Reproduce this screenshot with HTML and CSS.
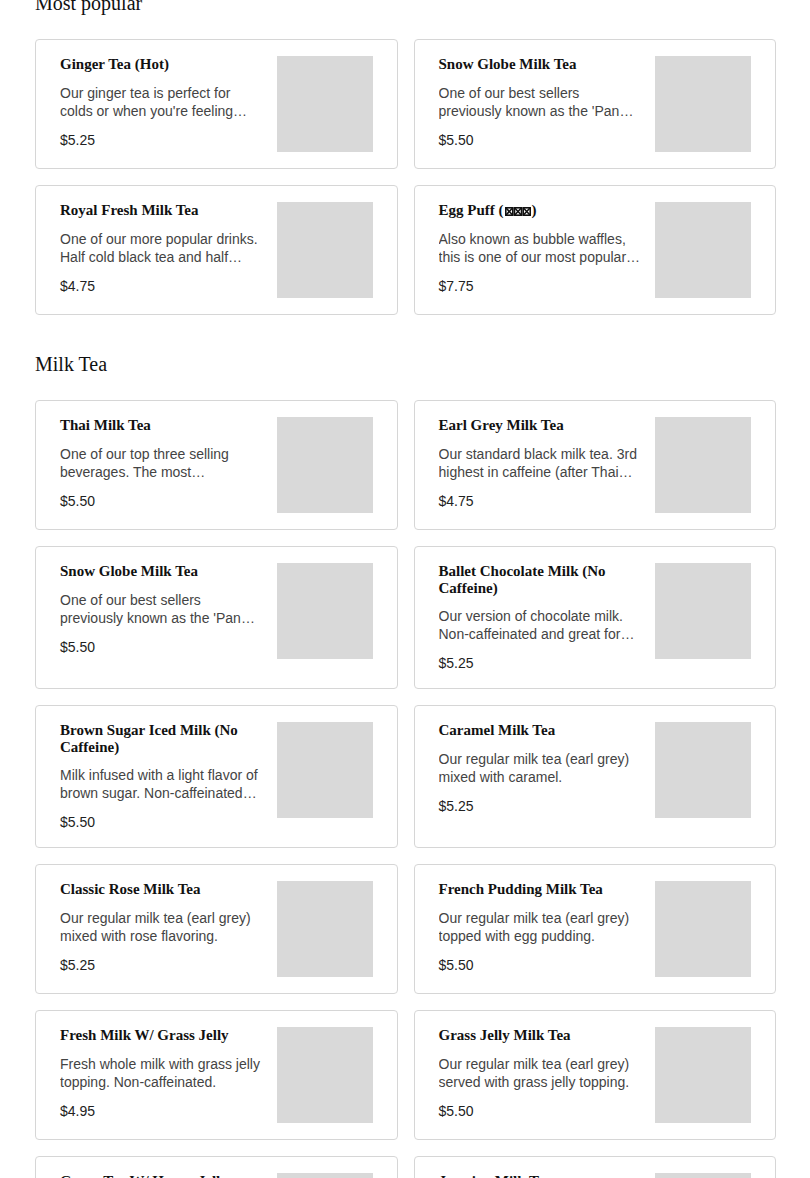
FILE: index.html
```html
<!DOCTYPE html>
<html lang="en">
<head>
    <meta charset="UTF-8">
    <meta name="viewport" content="width=device-width, initial-scale=1.0">
    <title>Menu</title>
    <link rel="stylesheet" href="styles.css">
</head>
<body>
    <div class="menu">
        <div class="section">
            <h2>Most popular</h2>
            <div class="grid">
                <div class="item">
                    <div class="info">
                        <h3>Ginger Tea (Hot)</h3>
                        <p class="desc">Our ginger tea is perfect for colds or when you're feeling under the weather. Served hot.</p>
                        <div class="price">$5.25</div>
                    </div>
                    <div class="thumb"></div>
                </div>
                <div class="item">
                    <div class="info">
                        <h3>Snow Globe Milk Tea</h3>
                        <p class="desc">One of our best sellers previously known as the 'Panda Milk Tea'.</p>
                        <div class="price">$5.50</div>
                    </div>
                    <div class="thumb"></div>
                </div>
                <div class="item">
                    <div class="info">
                        <h3>Royal Fresh Milk Tea</h3>
                        <p class="desc">One of our more popular drinks. Half cold black tea and half fresh milk.</p>
                        <div class="price">$4.75</div>
                    </div>
                    <div class="thumb"></div>
                </div>
                <div class="item">
                    <div class="info">
                        <h3>Egg Puff (<svg class="tofu" width="26" height="9" viewBox="0 0 26 9"><g fill="none" stroke="#111" stroke-width="1.6"><rect x="0.8" y="0.8" width="7" height="7.4"/><path d="M0.8 0.8l7 7.4M7.8 0.8l-7 7.4"/><rect x="9.5" y="0.8" width="7" height="7.4"/><path d="M9.5 0.8l7 7.4M16.5 0.8l-7 7.4"/><rect x="18.2" y="0.8" width="7" height="7.4"/><path d="M18.2 0.8l7 7.4M25.2 0.8l-7 7.4"/></g></svg>)</h3>
                        <p class="desc">Also known as bubble waffles, this is one of our most popular snacks.</p>
                        <div class="price">$7.75</div>
                    </div>
                    <div class="thumb"></div>
                </div>
            </div>
        </div>

        <div class="section">
            <h2>Milk Tea</h2>
            <div class="grid">
                <div class="item">
                    <div class="info">
                        <h3>Thai Milk Tea</h3>
                        <p class="desc">One of our top three selling beverages. The most caffeinated of our milk teas.</p>
                        <div class="price">$5.50</div>
                    </div>
                    <div class="thumb"></div>
                </div>
                <div class="item">
                    <div class="info">
                        <h3>Earl Grey Milk Tea</h3>
                        <p class="desc">Our standard black milk tea. 3rd highest in caffeine (after Thai and Royal).</p>
                        <div class="price">$4.75</div>
                    </div>
                    <div class="thumb"></div>
                </div>
                <div class="item">
                    <div class="info">
                        <h3>Snow Globe Milk Tea</h3>
                        <p class="desc">One of our best sellers previously known as the 'Panda Milk Tea'.</p>
                        <div class="price">$5.50</div>
                    </div>
                    <div class="thumb"></div>
                </div>
                <div class="item">
                    <div class="info">
                        <h3>Ballet Chocolate Milk (No Caffeine)</h3>
                        <p class="desc">Our version of chocolate milk. Non-caffeinated and great for kids.</p>
                        <div class="price">$5.25</div>
                    </div>
                    <div class="thumb"></div>
                </div>
                <div class="item">
                    <div class="info">
                        <h3>Brown Sugar Iced Milk (No Caffeine)</h3>
                        <p class="desc">Milk infused with a light flavor of brown sugar. Non-caffeinated drink.</p>
                        <div class="price">$5.50</div>
                    </div>
                    <div class="thumb"></div>
                </div>
                <div class="item">
                    <div class="info">
                        <h3>Caramel Milk Tea</h3>
                        <p class="desc">Our regular milk tea (earl grey) mixed with caramel.</p>
                        <div class="price">$5.25</div>
                    </div>
                    <div class="thumb"></div>
                </div>
                <div class="item">
                    <div class="info">
                        <h3>Classic Rose Milk Tea</h3>
                        <p class="desc">Our regular milk tea (earl grey) mixed with rose flavoring.</p>
                        <div class="price">$5.25</div>
                    </div>
                    <div class="thumb"></div>
                </div>
                <div class="item">
                    <div class="info">
                        <h3>French Pudding Milk Tea</h3>
                        <p class="desc">Our regular milk tea (earl grey) topped with egg pudding.</p>
                        <div class="price">$5.50</div>
                    </div>
                    <div class="thumb"></div>
                </div>
                <div class="item">
                    <div class="info">
                        <h3>Fresh Milk W/ Grass Jelly</h3>
                        <p class="desc">Fresh whole milk with grass jelly topping. Non-caffeinated.</p>
                        <div class="price">$4.95</div>
                    </div>
                    <div class="thumb"></div>
                </div>
                <div class="item">
                    <div class="info">
                        <h3>Grass Jelly Milk Tea</h3>
                        <p class="desc">Our regular milk tea (earl grey) served with grass jelly topping.</p>
                        <div class="price">$5.50</div>
                    </div>
                    <div class="thumb"></div>
                </div>
                <div class="item">
                    <div class="info">
                        <h3>Green Tea W/ Honey Jelly</h3>
                        <p class="desc">Our jasmine green milk tea served with honey jelly.</p>
                        <div class="price">$5.50</div>
                    </div>
                    <div class="thumb"></div>
                </div>
                <div class="item">
                    <div class="info">
                        <h3>Jasmine Milk Tea</h3>
                        <p class="desc">Jasmine green tea with milk. Lighter in caffeine.</p>
                        <div class="price">$4.75</div>
                    </div>
                    <div class="thumb"></div>
                </div>
            </div>
        </div>
    </div>
</body>
</html>
```

FILE: styles.css
```css
body {
    margin: 0;
    font-family: "Liberation Sans", Arial, sans-serif;
    color: #111;
    background: #fff;
}
.menu {
    margin-top: -9px;
    padding: 0 34px 0 35px;
}
.section {
    margin-bottom: 37px;
}
.section h2 {
    margin: 0 0 24px;
    font-family: "Liberation Serif", "Times New Roman", serif;
    font-weight: normal;
    font-size: 20px;
    line-height: 24px;
    color: #111;
}
.grid {
    display: grid;
    grid-template-columns: 1fr 1fr;
    gap: 16px;
}
.item {
    display: flex;
    align-items: flex-start;
    gap: 14px;
    padding: 16px 24px;
    border: 1px solid #d6d6d6;
    border-radius: 4px;
}
.info {
    flex: 1;
    min-width: 0;
}
.info h3 {
    margin: 0 0 11px;
    font-family: "Liberation Serif", "Times New Roman", serif;
    font-weight: bold;
    font-size: 15px;
    line-height: 1.1;
    color: #111;
}
.tofu {
    vertical-align: -1px;
    margin: 0 1px;
}
.desc {
    margin: 0 0 11px;
    font-size: 14px;
    line-height: 18px;
    color: #444;
    display: -webkit-box;
    -webkit-line-clamp: 2;
    -webkit-box-orient: vertical;
    overflow: hidden;
}
.price {
    font-size: 14px;
    line-height: 18px;
    color: #222;
}
.thumb {
    flex: none;
    width: 96px;
    height: 96px;
    background: #d9d9d9;
}
```
